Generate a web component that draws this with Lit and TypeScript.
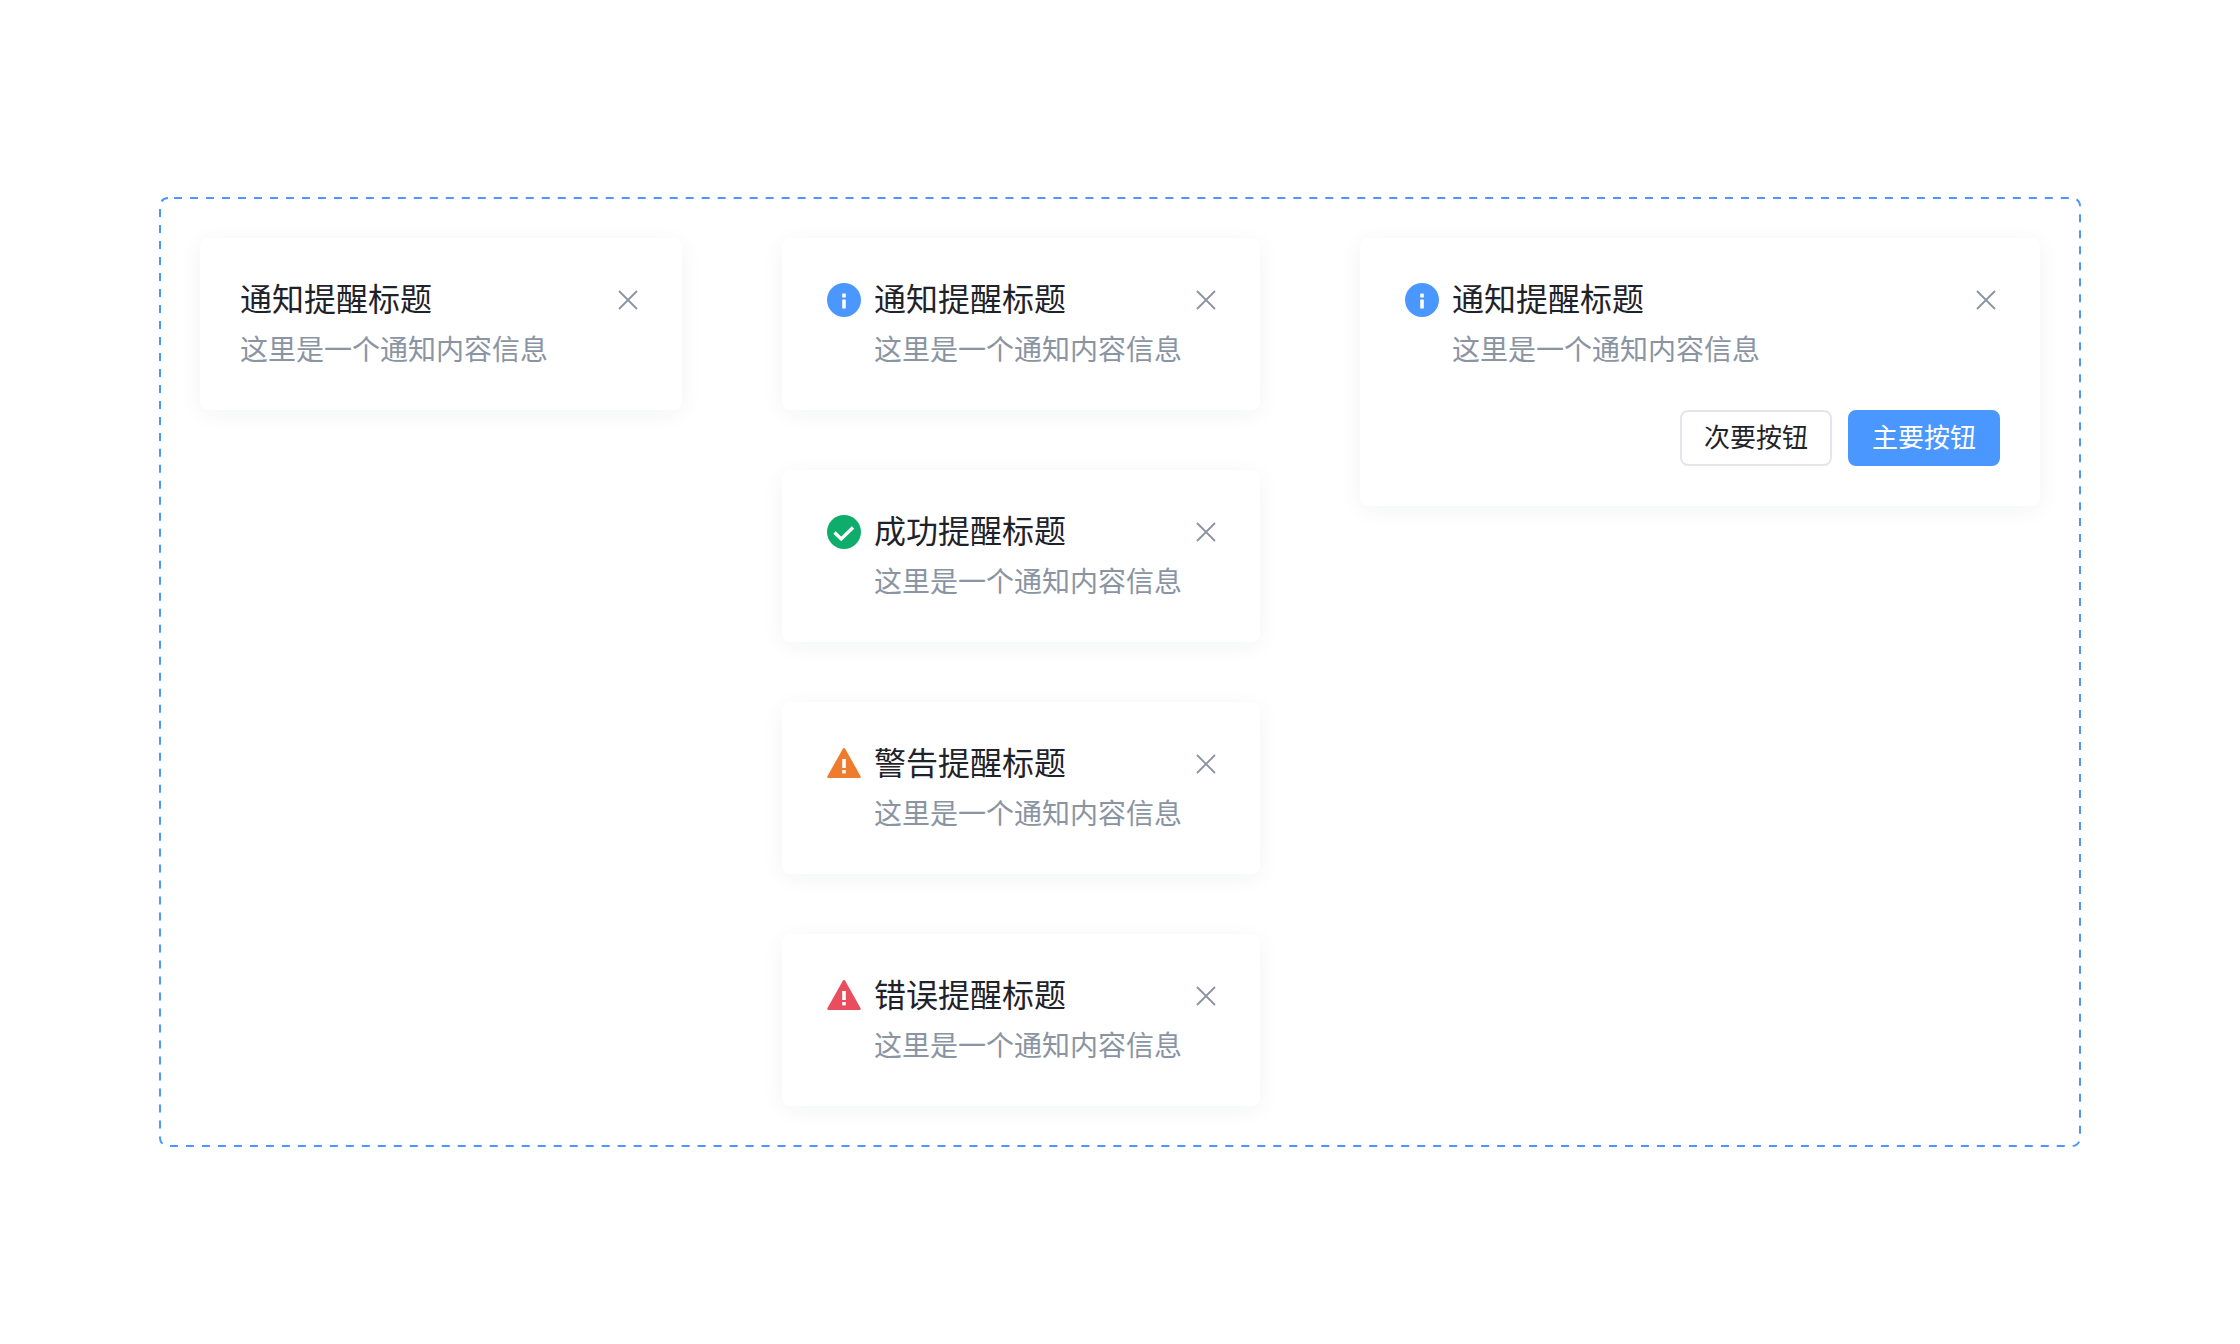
import { LitElement, html, css, svg } from "lit";
import { customElement } from "lit/decorators.js";

const triangle =
  "M17 1c.5 0 .9.2 1.2.7L33.6 29.3c.4.8 0 1.6-.9 1.6H1.3c-.9 0-1.3-.8-.9-1.6L15.8 1.7c.3-.5.7-.7 1.2-.7z";
const bang = svg`<rect x="15.2" y="12" width="3.6" height="9" fill="#fff"/><rect x="15.2" y="23" width="3.6" height="3.4" fill="#fff"/>`;

const icons: Record<string, unknown> = {
  info: svg`<circle cx="17" cy="17" r="17" fill="#4a97ff"/><rect x="15.2" y="10.6" width="3.6" height="3.8" rx=".4" fill="#fff"/><rect x="15.2" y="16.6" width="3.6" height="8.8" rx=".4" fill="#fff"/>`,
  success: svg`<circle cx="17" cy="17" r="17" fill="#0ead6c"/><path d="M7.5 17.5l6.7 6.4L26 12.6" fill="none" stroke="#fff" stroke-width="3.4"/>`,
  warning: svg`<path d="${triangle}" fill="#ef7b2e"/>${bang}`,
  error: svg`<path d="${triangle}" fill="#e94e5f"/>${bang}`,
};

@customElement("app-root")
export class AppRoot extends LitElement {
  static styles = css`
    :host {
      display: flex;
      justify-content: center;
      align-items: center;
      height: 1344px;
      background: #fff;
      font-family: "Noto Sans CJK SC", "Noto Sans", sans-serif;
    }
    .frame {
      position: relative;
      box-sizing: border-box;
      width: 1920px;
      height: 948px;
      padding: 40px;
      display: flex;
      gap: 100px;
      align-items: flex-start;
    }
    .dash {
      position: absolute;
      left: -1px;
      top: -1px;
    }
    .col {
      display: flex;
      flex-direction: column;
      gap: 60px;
    }
    .card {
      box-sizing: border-box;
      width: 478px;
      height: 172px;
      padding: 37px 40px 0;
      background: #fff;
      border-radius: 8px;
      box-shadow: 0 4px 24px rgba(20, 30, 50, 0.05);
    }
    .first .card {
      width: 482px;
    }
    .card.wide {
      width: 680px;
      height: 268px;
    }
    .card.iconed {
      padding-left: 45px;
    }
    .row {
      display: flex;
      align-items: flex-start;
    }
    .icon {
      flex: none;
      width: 34px;
      height: 34px;
      margin: 8px 13px 0 0;
    }
    .text {
      flex: 1;
      min-width: 0;
    }
    .title {
      font-size: 32px;
      line-height: 44px;
      color: #1f2329;
    }
    .desc {
      font-size: 28px;
      line-height: 44px;
      margin-top: 7px;
      color: #8a94a3;
      white-space: nowrap;
    }
    .close {
      flex: none;
      width: 22px;
      height: 22px;
      margin: 14px 3px 0 0;
    }
    .actions {
      display: flex;
      justify-content: flex-end;
      gap: 16px;
      margin-top: 40px;
    }
    .btn {
      box-sizing: border-box;
      width: 152px;
      height: 56px;
      border-radius: 8px;
      border: 2px solid #e5e6eb;
      background: #fff;
      color: #1f2329;
      font: inherit;
      font-size: 26px;
      padding: 0 0 5px;
    }
    .btn.primary {
      background: #4a97ff;
      border-color: #4a97ff;
      color: #fff;
    }
  `;

  private card(title: string, icon?: string, actions = false) {
    return html`<div class="card ${icon ? "iconed" : ""} ${actions ? "wide" : ""}">
      <div class="row">
        ${icon ? html`<svg class="icon" viewBox="0 0 34 34">${icons[icon]}</svg>` : ""}
        <div class="text">
          <div class="title">${title}</div>
          <div class="desc">这里是一个通知内容信息</div>
        </div>
        <svg class="close" viewBox="0 0 22 22" fill="none" stroke="#8a94a3" stroke-width="1.8">
          <path d="M2 2l18 18M20 2L2 20" />
        </svg>
      </div>
      ${actions
        ? html`<div class="actions">
            <button class="btn">次要按钮</button>
            <button class="btn primary">主要按钮</button>
          </div>`
        : ""}
    </div>`;
  }

  render() {
    return html`<div class="frame">
      <svg class="dash" width="1922" height="950" fill="none">
        <rect x="1" y="1" width="1920" height="948" rx="8" stroke="#4a97ff" stroke-width="2" stroke-dasharray="7.995 7.995" stroke-dashoffset="9.99" />
      </svg>
      <div class="col first">${this.card("通知提醒标题")}</div>
      <div class="col">
        ${this.card("通知提醒标题", "info")}
        ${this.card("成功提醒标题", "success")}
        ${this.card("警告提醒标题", "warning")}
        ${this.card("错误提醒标题", "error")}
      </div>
      <div class="col">${this.card("通知提醒标题", "info", true)}</div>
    </div>`;
  }
}
